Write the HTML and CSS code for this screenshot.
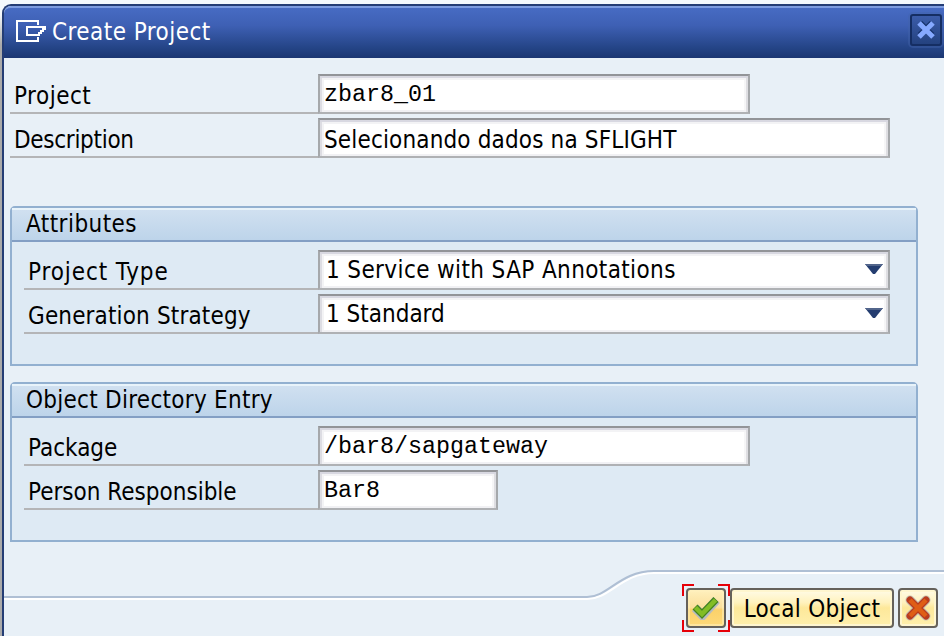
FILE: index.html
```html
<!DOCTYPE html>
<html lang="en">
<head>
<meta charset="utf-8">
<title>Create Project</title>
<link rel="stylesheet" href="styles.css">
</head>
<body>
<main class="window">
  <header class="titlebar">
    <svg class="title-icon" width="32" height="24" viewBox="0 0 32 24" shape-rendering="crispEdges"><path d="M22 5V1H1v20h21v-4M11 7h18v2h-2v2h-2v2h-2v2H11z" fill="none" stroke="#fff" stroke-width="2"/></svg>
    <h1 class="title">Create Project</h1>
    <button class="close" aria-label="Close"><svg width="20" height="20" viewBox="0 0 20 20"><path d="M4 3l12 12M16 3L4 15" stroke="#142f68" stroke-width="6"/><path d="M3 3l14 14M17 3L3 17" stroke="#86a9ff" stroke-width="5"/></svg></button>
  </header>
  <section class="general">
    <div class="row"><span class="label t-project">Project</span><span class="field medium mono">zbar8_01</span></div>
    <div class="row"><span class="label t-description">Description</span><span class="field wide t-value">Selecionando dados na SFLIGHT</span></div>
  </section>
  <section class="group">
    <h2 class="group-title t-attributes">Attributes</h2>
    <div class="group-body">
      <div class="row"><span class="label t-type">Project Type</span><span class="field wide select"><span class="t-service">1 Service with SAP Annotations</span><svg class="arrow" width="18" height="11"><path d="M0 1h18L10 11H8z" fill="#243d70"/><path d="M0 1h18l-2 2H2z" fill="#52658b"/></svg></span></div>
      <div class="row"><span class="label t-generation">Generation Strategy</span><span class="field wide select"><span>1 Standard</span><svg class="arrow" width="18" height="11"><path d="M0 1h18L10 11H8z" fill="#243d70"/><path d="M0 1h18l-2 2H2z" fill="#52658b"/></svg></span></div>
    </div>
  </section>
  <section class="group">
    <h2 class="group-title t-entry">Object Directory Entry</h2>
    <div class="group-body">
      <div class="row"><span class="label">Package</span><span class="field medium mono">/bar8/sapgateway</span></div>
      <div class="row"><span class="label">Person Responsible</span><span class="field short mono">Bar8</span></div>
    </div>
  </section>
  <footer class="footer">
    <svg class="divider" width="940" height="34" viewBox="0 0 940 34"><path d="M0 31H583C606 31 618 5 650 5H940" fill="none" stroke="#fff" stroke-width="2"/><path d="M0 29H583C604 29 616 3 650 3H940" fill="none" stroke="#afbfd4" stroke-width="2"/></svg>
    <div class="actions">
      <button class="btn icon default" aria-label="Continue"><svg class="check" width="28" height="24" viewBox="0 0 28 24"><path d="M3 12l7.500 7.500L24.500 4" fill="none" stroke="#b5bbc0" stroke-width="9"/><path d="M3 11l7 7L24 3.500" fill="none" stroke="#448321" stroke-width="7"/><path d="M3.500 11.500l6.500 6.500L23.500 4" fill="none" stroke="#82bd26" stroke-width="4.500"/></svg><svg class="focus" width="48" height="48"><path d="M1 12V1h11M36 1h11v11M1 36v11h11M36 47h11V36" fill="none" stroke="#e60008" stroke-width="2"/></svg></button>
      <button class="btn text">Local Object</button>
      <button class="btn icon" aria-label="Cancel"><svg width="26" height="26" viewBox="0 0 26 26"><path d="M5 5l16 16M21 5L5 21" stroke="#c8c3b4" stroke-width="9" stroke-linecap="round"/><path d="M5 5l16 16M21 5L5 21" stroke="#b83c20" stroke-width="7" stroke-linecap="round"/><path d="M5 5l16 16M21 5L5 21" stroke="#df5e16" stroke-width="4.500"/></svg></button>
    </div>
  </footer>
</main>
</body>
</html>
```
FILE: styles.css
```css
* { box-sizing: border-box; }
body {
  margin: 0;
  height: 636px;
  overflow: hidden;
  padding-top: 4px;
  background: linear-gradient(#f4f9fd 14px, #aaa 45px, #aaa);
  background-color: #f4f9fd;
  font: 24px/30px "DejaVu Sans Condensed", "DejaVu Sans", sans-serif;
  font-stretch: condensed;
  color: #000;
}
.window {
  height: 632px;
  margin-left: 2px;
  border-left: 2px solid #243d75;
  border-top: 2px solid #243d75;
  border-top-left-radius: 9px;
  background: #e8f0f7;
  box-shadow: 0 -10px 0 #f4f9fd;
}
.titlebar {
  display: flex;
  align-items: center;
  height: 52px;
  padding: 0 2px 0 12px;
  border-top: 2px solid #7d9ce0;
  border-top-left-radius: 7px;
  background: linear-gradient(#476bc3, #3e60b4 35%, #244486 80%, #1b3672);
}
.title-icon { margin-top: -3px; }
.title {
  flex: 1;
  margin: -2px 0 0 4px;
  font-size: 24px;
  font-weight: 400;
  letter-spacing: .45px;
  color: #fff;
}
.close {
  display: flex;
  align-items: center;
  justify-content: center;
  width: 32px;
  height: 32px;
  margin-top: -6px;
  padding: 0;
  border: 2px solid #152e63;
  border-radius: 3px;
  background: linear-gradient(#3b5ca9, #24427f);
  box-shadow: 0 0 0 2px #4464aa66;
}
.close svg { flex: none; }
.general { height: 148px; padding: 16px 0 0 6px; }
.row { display: flex; height: 40px; margin-bottom: 4px; }
.label {
  width: 308px;
  padding: 7px 0 0 4px;
  border-bottom: 2px solid #b4b5b7;
  white-space: nowrap;
}
.field {
  height: 40px;
  padding: 5px 4px 0;
  border: 2px solid #a5a8ab;
  border-top-color: #929498;
  border-bottom-color: #afb1b4;
  background: #fff;
  box-shadow: inset 0 2px 0 #d8d8e1, inset 2px 0 0 #dddde3, inset -2px 0 0 #dedee2, inset 0 -2px 0 #f1f1f4, inset 0 4px 0 #f3f3f5, inset 4px 0 0 #f3f3f5, inset -4px 0 0 #f6f6f7;
  white-space: nowrap;
}
.short { width: 180px; }
.medium { width: 432px; }
.wide { width: 572px; }
.mono { padding-top: 4px; font-family: "Liberation Mono", monospace; font-size: 23.33px; }
.select { display: flex; justify-content: space-between; padding: 3px 5px 0 6px; }
.arrow { margin-top: 8px; }
.t-project { letter-spacing: .5px; }
.t-description { letter-spacing: -.3px; }
.t-value { letter-spacing: .15px; }
.t-type { letter-spacing: .9px; }
.t-generation { letter-spacing: .15px; }
.t-service { letter-spacing: .38px; }
.group {
  width: 908px;
  height: 160px;
  margin: 0 0 16px 6px;
  border: 2px solid #92b0d0;
  border-radius: 5px 5px 0 0;
  background: #deeaf4;
}
.group-title {
  height: 34px;
  margin: 0;
  padding: 0 14px;
  border-top: 2px solid #e8f3fa;
  border-bottom: 2px solid #839fc4;
  background: linear-gradient(#d0e0f0, #bdd4ea);
  font-size: 24px;
  line-height: 28px;
  font-weight: 400;
}
.t-attributes { letter-spacing: .45px; }
.t-entry { letter-spacing: .27px; }
.group-body { padding: 8px 0 0 12px; }
.group-body .label { width: 294px; }
.footer { height: 78px; margin-top: 26px; }
.divider { display: block; }
.actions {
  display: flex;
  justify-content: flex-end;
  gap: 4px;
  margin-top: -14px;
  padding-right: 6px;
}
.btn {
  position: relative;
  display: flex;
  align-items: center;
  justify-content: center;
  height: 40px;
  padding: 0;
  border: 2px solid #65615b;
  border-radius: 4px;
  background: linear-gradient(#fffbe7, #fff2bd 35%, #fde89a 50%, #fff0ad);
  box-shadow: inset 0 0 0 2px #fff6cf;
  font: inherit;
  color: #000;
}
.icon { width: 40px; }
.text { width: 164px; padding-top: 2px; letter-spacing: .3px; }
.check { margin-top: -1px; }
.default { background: linear-gradient(#fff0bd, #fbdf9c 48%, #fbd16a 55%, #fed979); box-shadow: inset 0 0 0 2px #fff0bd88; }
.focus { position: absolute; left: -6px; top: -6px; }
```
